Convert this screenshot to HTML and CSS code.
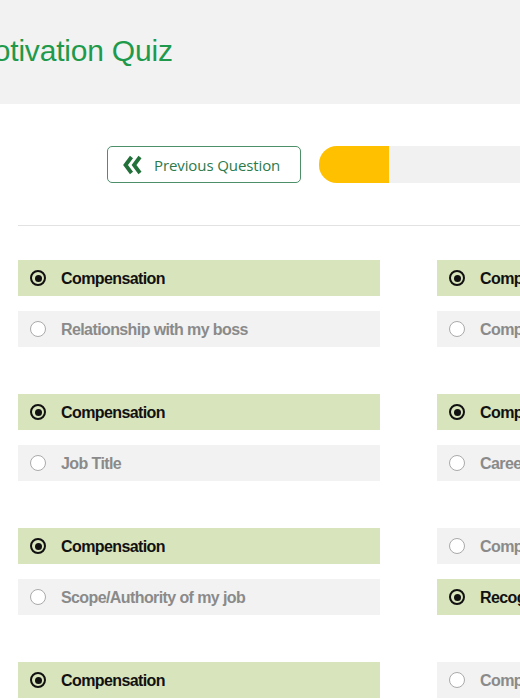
FILE: index.html
```html
<!DOCTYPE html>
<html>
<head>
<meta charset="utf-8">
<link rel="stylesheet" href="styles.css">
</head>
<body>
<header class="header">
  <h1 class="title">Motivation Quiz</h1>
</header>
<main class="main">
  <div class="toolbar">
    <button class="prev-btn">
      <svg class="chev" width="21" height="20" viewBox="0 0 21 20"><polyline points="9.5,2 3.5,10 9.5,18" fill="none" stroke="#22703a" stroke-width="3.8" stroke-linejoin="miter"/><polyline points="18,2 12,10 18,18" fill="none" stroke="#22703a" stroke-width="3.8" stroke-linejoin="miter"/></svg>
      <span>Previous Question</span>
    </button>
    <div class="progress"><div class="progress-fill" style="width:70px"></div></div>
  </div>
  <hr class="divider">
  <div class="grid">
    <div class="group">
      <div class="opt sel"><span class="radio on"></span>Compensation</div>
      <div class="opt"><span class="radio"></span>Relationship with my boss</div>
    </div>
    <div class="group">
      <div class="opt sel"><span class="radio on"></span>Compensation</div>
      <div class="opt"><span class="radio"></span>Company culture</div>
    </div>
    <div class="group">
      <div class="opt sel"><span class="radio on"></span>Compensation</div>
      <div class="opt"><span class="radio"></span>Job Title</div>
    </div>
    <div class="group">
      <div class="opt sel"><span class="radio on"></span>Compensation</div>
      <div class="opt"><span class="radio"></span>Career growth</div>
    </div>
    <div class="group">
      <div class="opt sel"><span class="radio on"></span>Compensation</div>
      <div class="opt"><span class="radio"></span>Scope/Authority of my job</div>
    </div>
    <div class="group">
      <div class="opt"><span class="radio"></span>Compensation</div>
      <div class="opt sel"><span class="radio on"></span>Recognition</div>
    </div>
    <div class="group">
      <div class="opt sel"><span class="radio on"></span>Compensation</div>
      <div class="opt"><span class="radio"></span>Work/Life balance</div>
    </div>
    <div class="group">
      <div class="opt"><span class="radio"></span>Compensation</div>
      <div class="opt sel"><span class="radio on"></span>Location</div>
    </div>
  </div>
</main>
</body>
</html>
```
FILE: styles.css
```css
html, body {
  margin: 0;
  padding: 0;
  background: #ffffff;
  overflow: hidden;
  font-family: "Liberation Sans", Arial, sans-serif;
}
.header {
  background: #f2f2f2;
  height: 104px;
  display: flex;
  align-items: center;
  overflow: hidden;
}
.title {
  margin: 0 0 0 -31px;
  font-size: 30px;
  font-weight: normal;
  color: #1f9a4c;
  white-space: nowrap;
  line-height: 1;
  letter-spacing: -0.2px;
  position: relative;
  top: -1px;
}
.main {
  padding-left: 18px;
  width: 900px;
}
.toolbar {
  display: flex;
  align-items: center;
  gap: 18px;
  margin-top: 42px;
  padding-left: 89px;
}
.prev-btn {
  width: 194px;
  height: 37px;
  box-sizing: border-box;
  border: 1px solid #4c8f68;
  border-radius: 5px;
  background: #ffffff;
  display: flex;
  align-items: center;
  padding: 0 0 0 14px;
  gap: 11px;
  font-family: "Open Sans", "Noto Sans", sans-serif;
  font-size: 15px;
  letter-spacing: -0.1px;
  color: #2c7a4b;
  cursor: pointer;
}
.chev { flex: none; }
.progress {
  flex: 1;
  height: 37px;
  background: #f1f1f1;
  border-radius: 18px 0 0 18px;
  overflow: hidden;
}
.progress-fill {
  height: 100%;
  background: #ffc000;
}
.divider {
  border: none;
  border-top: 1px solid #e2e2e2;
  margin: 42px 0 0 0;
}
.grid {
  display: grid;
  grid-template-columns: 362px 362px;
  column-gap: 57px;
  row-gap: 47px;
  margin-top: 34px;
}
.group {
  display: flex;
  flex-direction: column;
  gap: 15px;
}
.opt {
  height: 36px;
  box-sizing: border-box;
  padding-top: 2px;
  background: #f2f2f2;
  display: flex;
  align-items: center;
  padding-left: 12px;
  gap: 15px;
  font-size: 16px;
  letter-spacing: -0.6px;
  font-weight: bold;
  color: #8a8a8a;
  white-space: nowrap;
}
.opt.sel {
  background: #d8e4bc;
  color: #111111;
}
.radio {
  width: 16px;
  height: 16px;
  margin-top: -2px;
  box-sizing: border-box;
  border-radius: 50%;
  border: 1px solid #aaaaaa;
  background: #ffffff;
  flex: none;
  display: flex;
  align-items: center;
  justify-content: center;
}
.opt.sel .radio { background: transparent; }
.radio.on {
  border: 2px solid #111111;
}
.radio.on::after {
  content: "";
  width: 7px;
  height: 7px;
  border-radius: 50%;
  background: #111111;
}
```
